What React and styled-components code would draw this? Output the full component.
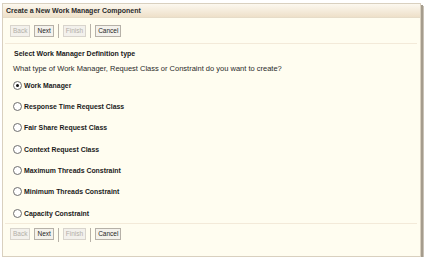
import React from "react";
import styled, { createGlobalStyle } from "styled-components";

const GlobalStyle = createGlobalStyle`
  html, body {
    margin: 0;
    padding: 0;
    background: #ffffff;
  }
  body {
    font-family: "Liberation Sans", Arial, sans-serif;
  }
`;

const options = [
  "Work Manager",
  "Response Time Request Class",
  "Fair Share Request Class",
  "Context Request Class",
  "Maximum Threads Constraint",
  "Minimum Threads Constraint",
  "Capacity Constraint",
];

function Toolbar({ footer }) {
  return (
    <ButtonBar $footer={footer}>
      <Button disabled>Back</Button>
      <Button>Next</Button>
      <Sep />
      <Button disabled>Finish</Button>
      <Sep />
      <Button>Cancel</Button>
    </ButtonBar>
  );
}

function App() {
  return (
    <>
      <GlobalStyle />
      <Page>
        <Panel>
          <Header>Create a New Work Manager Component</Header>
          <Toolbar />
          <Divider />
          <Body>
            <SectionTitle>Select Work Manager Definition type</SectionTitle>
            <Question>
              What type of Work Manager, Request Class or Constraint do you want
              to create?
            </Question>
            <Options>
              {options.map((label, i) => (
                <Option key={label}>
                  <Radio $checked={i === 0} />
                  <Label>{label}</Label>
                </Option>
              ))}
            </Options>
          </Body>
          <Divider />
          <Toolbar footer />
        </Panel>
      </Page>
    </>
  );
}

const Page = styled.div`
  padding: 3px 0 0 2px;
`;

const Panel = styled.div`
  width: 417px;
  height: 252px;
  background: #fffdf0;
  border: 1px solid #d9d0bf;
  box-shadow: 2px 2px 0 #a59c8d, 3px 3px 0 #c9c2b6;
  display: flex;
  flex-direction: column;
`;

const Header = styled.div`
  height: 13px;
  line-height: 13px;
  padding-left: 3px;
  background: linear-gradient(#fcf8ef, #eee0c9);
  border-bottom: 1px solid #e6dcc8;
  font-weight: bold;
  font-size: 7px;
  color: #2a2a2a;
`;

const ButtonBar = styled.div`
  display: flex;
  align-items: center;
  gap: 4px;
  padding-left: 7px;
  height: 25px;
  flex: none;
  ${(p) =>
    p.$footer &&
    `
    align-items: flex-start;
    height: 32px;
    padding-top: 4px;
    box-sizing: border-box;
  `}
`;

const Button = styled.span`
  display: inline-block;
  height: 10px;
  line-height: 10px;
  padding: 0 2px;
  border: 1px solid ${(p) => (p.disabled ? "#d8d4cc" : "#b6b1a8")};
  background: ${(p) => (p.disabled ? "#f3f1ec" : "#f4f2ec")};
  color: ${(p) => (p.disabled ? "#b2aea7" : "#1e1e1e")};
  font-size: 6.5px;
`;

const Sep = styled.span`
  width: 1px;
  height: 14px;
  background: #b8b2a8;
  margin-top: ${(p) => (p.$footer ? "-2px" : "0")};
`;

const Divider = styled.div`
  flex: none;
  height: 1px;
  margin: 0 3px 0 2px;
  background: #f3ead9;
`;

const Body = styled.div`
  flex: 1;
  padding: 4px 0 0 10px;
`;

const SectionTitle = styled.div`
  font-weight: bold;
  font-size: 7px;
  color: #1a1a1a;
  height: 12px;
  line-height: 12px;
  padding-left: 1px;
`;

const Question = styled.div`
  font-size: 7.5px;
  color: #2a2a2a;
  margin-top: 3px;
  height: 12px;
  line-height: 12px;
`;

const Options = styled.div`
  display: flex;
  flex-direction: column;
  gap: 9.4px;
  margin-top: 4px;
`;

const Option = styled.div`
  display: flex;
  align-items: center;
  gap: 2px;
  height: 12px;
`;

const Radio = styled.span`
  flex: none;
  width: 7px;
  height: 7px;
  border-radius: 50%;
  border: 1px solid #6e6e6e;
  background: #fff;
  position: relative;
  &::after {
    content: "";
    display: ${(p) => (p.$checked ? "block" : "none")};
    position: absolute;
    left: 2px;
    top: 2px;
    width: 3px;
    height: 3px;
    border-radius: 50%;
    background: #111;
  }
`;

const Label = styled.span`
  font-weight: bold;
  font-size: 6.9px;
  color: #1a1a1a;
`;

export default App;
